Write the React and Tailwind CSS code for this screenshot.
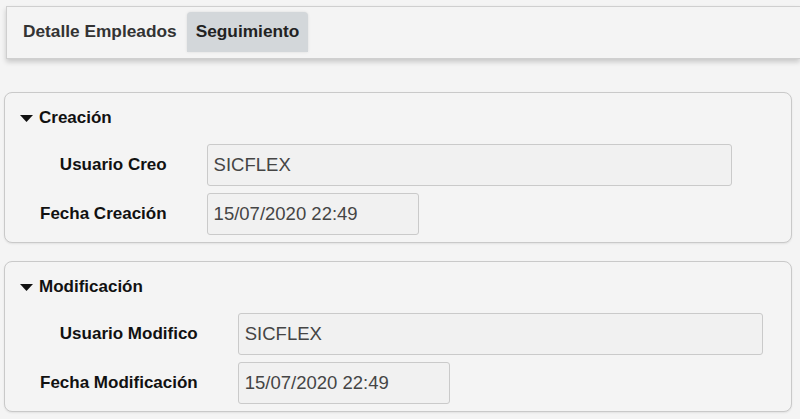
import { useState } from "react";

const secciones = [
  {
    titulo: "Creación",
    campos: [
      { label: "Usuario Creo", value: "SICFLEX", ancho: "w-[525px]" },
      { label: "Fecha Creación", value: "15/07/2020 22:49", ancho: "w-[212px]" },
    ],
  },
  {
    titulo: "Modificación",
    campos: [
      { label: "Usuario Modifico", value: "SICFLEX", ancho: "w-[525px]" },
      { label: "Fecha Modificación", value: "15/07/2020 22:49", ancho: "w-[212px]" },
    ],
  },
];

function Seccion({ titulo, campos }) {
  const [open, setOpen] = useState(true);

  return (
    <div className="mr-[8px] ml-[4px] rounded-[8px] border border-[#c9c9c9] bg-[#f4f4f4] pb-[7px] shadow-[0_1px_2px_rgba(0,0,0,0.08)]">
      <button
        onClick={() => setOpen((v) => !v)}
        className="flex h-[20px] items-center gap-[6px] pt-0 pl-[15px] mt-[15px] text-[17px] font-bold leading-[20px] text-[#111]"
      >
        <svg width="13" height="7" viewBox="0 0 13 7" className="shrink-0">
          <path d="M0 0h13L6.5 7z" fill="#111" />
        </svg>
        {titulo}
      </button>
      {open ? (
        <div className="mt-[16px] grid grid-cols-[auto_1fr] items-center gap-x-[40px] gap-y-[7px] pl-[35px]">
          {campos.map((campo) => (
            <div key={campo.label} className="contents">
              <label className="text-right text-[17px] font-bold text-[#111]">{campo.label}</label>
              <input
                readOnly
                value={campo.value}
                className={`${campo.ancho} h-[42px] rounded-[3px] border border-[#cacaca] bg-[#f1f1f1] px-[6px] text-[18.5px] text-[#454545] outline-none`}
              />
            </div>
          ))}
        </div>
      ) : null}
    </div>
  );
}

export default function App() {
  const [tab, setTab] = useState("seguimiento");

  return (
    <div className="min-h-screen bg-[#f4f4f4] pt-[6px] font-['Liberation_Sans',Arial,sans-serif]">
      <div className="ml-[6px] flex h-[53px] items-start border-t border-b border-l border-[#cfcfcf] bg-[#f4f4f4] pt-[5px] pl-[7px] shadow-[0_3px_5px_rgba(0,0,0,0.18)]">
        <button
          onClick={() => setTab("detalle")}
          className={`h-[40px] rounded-t-[4px] px-[9px] text-[17.3px] font-bold ${
            tab === "detalle" ? "bg-[#d3d7da] text-[#222]" : "text-[#333]"
          }`}
        >
          Detalle Empleados
        </button>
        <button
          onClick={() => setTab("seguimiento")}
          className={`ml-[1px] h-[40px] rounded-t-[4px] px-[9px] text-[17.3px] font-bold ${
            tab === "seguimiento" ? "bg-[#d3d7da] text-[#222] shadow-[0_0_3px_rgba(0,0,0,0.1)]" : "text-[#333]"
          }`}
        >
          Seguimiento
        </button>
      </div>

      <div className="mt-[33px] flex flex-col gap-[18px]">
        {secciones.map((s) => (
          <Seccion key={s.titulo} titulo={s.titulo} campos={s.campos} />
        ))}
      </div>
    </div>
  );
}
